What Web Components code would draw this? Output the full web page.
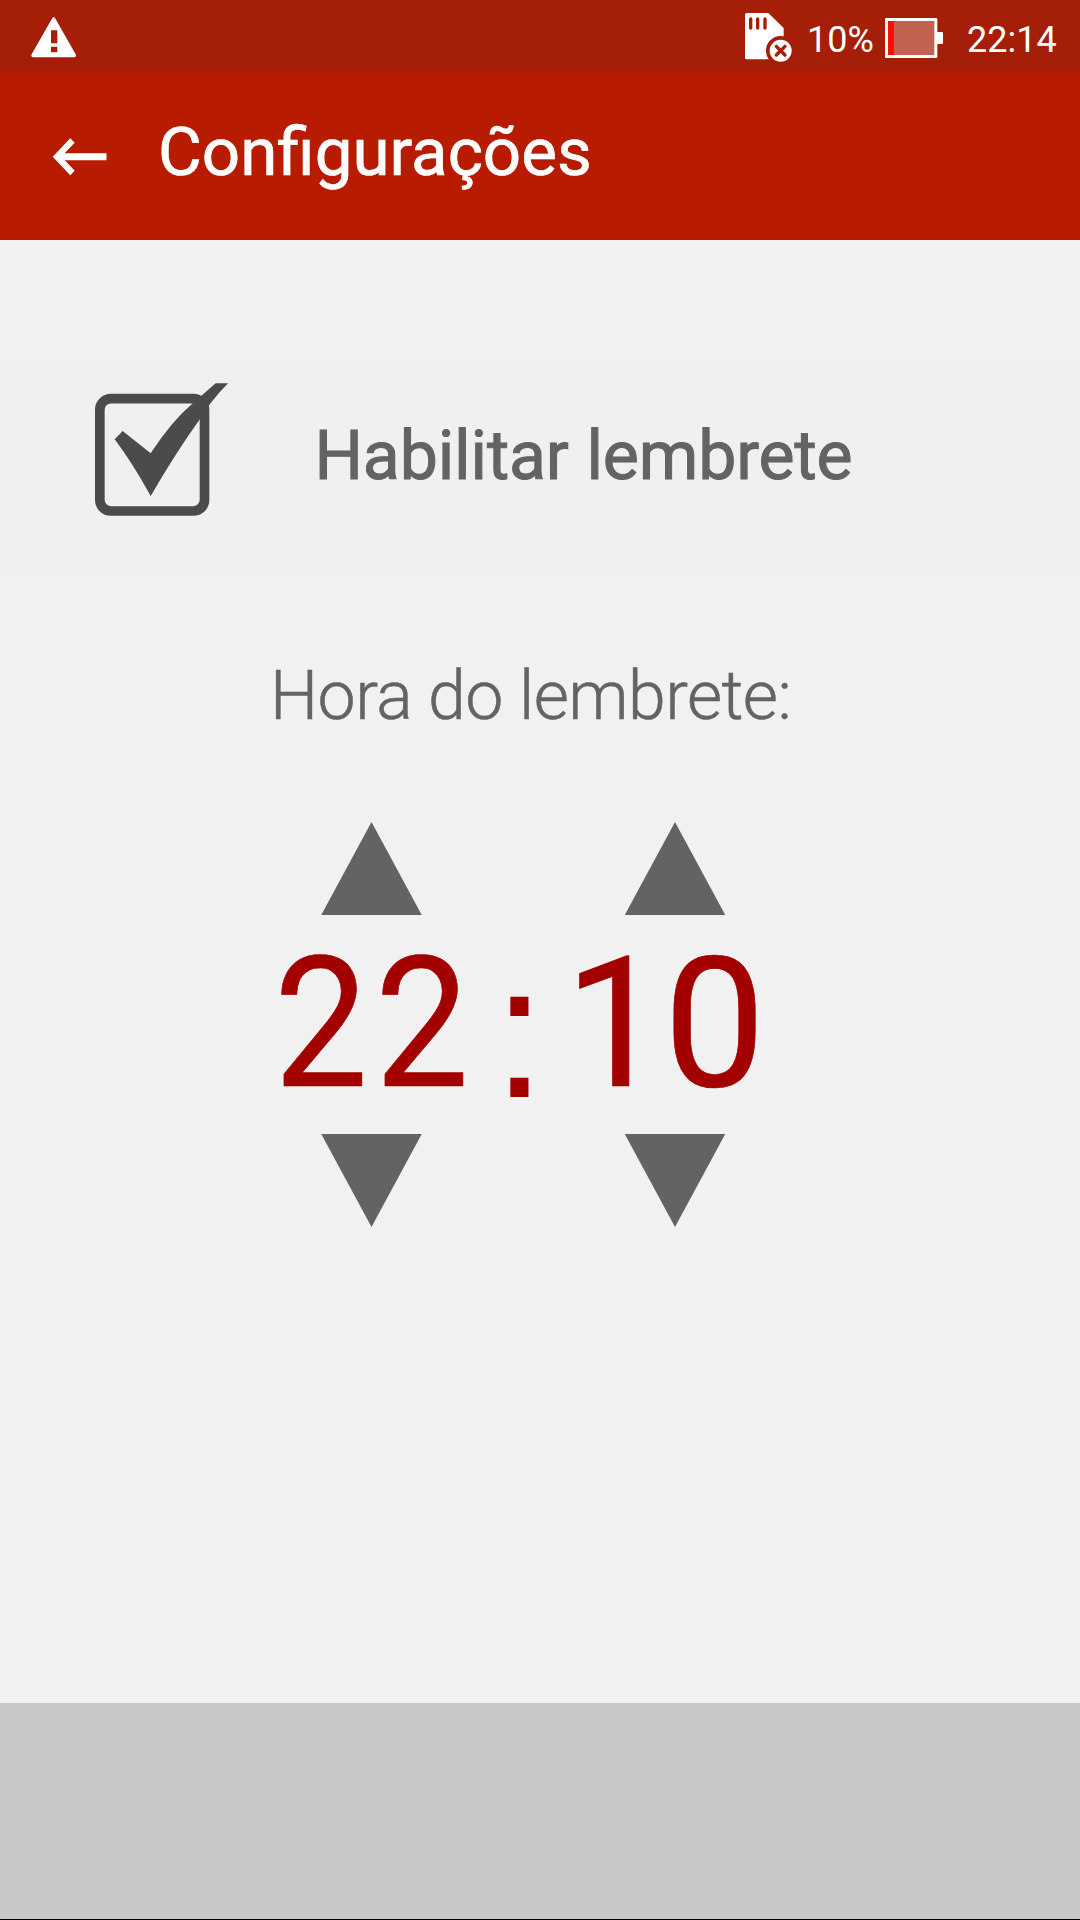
<!DOCTYPE html>
<html lang="pt-BR">
<head>
<meta charset="utf-8">
<title>Configurações</title>
<style>
html,body{margin:0;padding:0;background:#f1f1f1}
body{font-family:Roboto,sans-serif}
</style>
</head>
<body>
<reminder-settings></reminder-settings>
<script>
const define = (name, html) => customElements.define(name, class extends HTMLElement {
  constructor() {
    super();
    const t = document.createElement('template');
    t.innerHTML = html;
    this.attachShadow({ mode: 'open' }).append(t.content.cloneNode(true));
  }
});

define('icon-warning', `<style>:host{display:block}svg{display:block}</style>
<svg width="47" height="42" viewBox="0 0 141 126">
  <path fill="#fff" fill-rule="evenodd" d="M64 3Q68 -3 72 3L134 112Q137 121 130 121H6Q-1 121 2 112ZM60 40V79H79V40ZM60 89V106H79V89Z"/>
</svg>`);

define('icon-sdcard', `<style>:host{display:block}svg{display:block}</style>
<svg width="48" height="50" viewBox="0 0 144 150">
  <path fill="#fff" d="M5 0H70L116 45V139H5Q0 139 0 134V5Q0 0 5 0Z"/>
  <path stroke="#a41e08" stroke-width="10" stroke-linecap="round" d="M17 18V45M38 18V45M60 18V45"/>
  <circle cx="107" cy="113" r="44" fill="#a41e08"/>
  <circle cx="107" cy="113" r="33" fill="#fff"/>
  <path stroke="#a41e08" stroke-width="10" stroke-linecap="round" d="M94 100L120 126M120 100L94 126"/>
</svg>`);

define('icon-battery', `<style>:host{display:block}svg{display:block}</style>
<svg width="58" height="40" viewBox="0 0 174 120">
  <rect width="157" height="120" rx="4" fill="#fff"/>
  <rect x="150" y="42" width="24" height="36" rx="3" fill="#fff"/>
  <rect x="9" y="9" width="139" height="102" fill="#c26250"/>
  <rect x="9" y="9" width="18" height="102" fill="#ff0d00"/>
</svg>`);

define('icon-back', `<style>:host{display:block}svg{display:block}</style>
<svg width="56" height="42" viewBox="0 0 56 42">
  <path fill="none" stroke="#fff" stroke-width="7" d="M5 20.7H54.500"/>
  <path fill="none" stroke="#fff" stroke-width="6.2" d="M20.5 4.5L5 20.7L20.5 37"/>
</svg>`);

define('check-box', `<style>:host{display:block}svg{display:block}</style>
<svg width="134" height="134" viewBox="75 99 402 402">
  <rect x="89.500" y="146" width="314" height="337" rx="33" fill="none" stroke="#4b4b4b" stroke-width="29"/>
  <path fill="#4b4b4b" d="M134 268L158 243L242 310Q305 214 365 163L437 100H474Q418 158 390 207Q318 307 242 438Q188 340 134 268Z"/>
</svg>`);

define('status-bar', `<style>
:host{display:flex;height:72px;box-sizing:border-box;background:#a41e08;color:#fff;padding:0 23px 0 31px;font-size:36px}
.grow{flex:1}
icon-warning{margin-top:17px}
icon-sdcard{margin-top:12.600px}
icon-battery{margin:18px 24px 0 12px}
span{line-height:46px;padding-top:17px;white-space:nowrap}
.pct{width:66px;margin-left:14px}
.time{width:90px}
</style>
<icon-warning></icon-warning><div class="grow"></div>
<icon-sdcard></icon-sdcard><span class="pct">10%</span><icon-battery></icon-battery><span class="time">22:14</span>`);

define('app-bar', `<style>
:host{display:flex;height:168px;box-sizing:border-box;background:#b81c00;color:#fff;padding-left:52px}
icon-back{margin-top:64px}
h1{margin:40px 0 0 50px;font-size:67.300px;font-weight:400;line-height:80px;white-space:nowrap;-webkit-text-stroke:.7px currentColor}
</style>
<icon-back></icon-back><h1><slot></slot></h1>`);

define('option-row', `<style>
:host{display:flex;height:216px;background:#f0f0f0;box-sizing:border-box;padding-left:95px;color:#636363}
check-box{margin-top:23px}
span{margin:56px 0 0 85.500px;font-size:68px;line-height:80px;font-weight:400;letter-spacing:-.15px;word-spacing:1px;white-space:nowrap;-webkit-text-stroke:1px currentColor}
</style>
<check-box></check-box><span><slot></slot></span>`);

define('step-arrow', `<style>
:host{display:block;width:100.500px;height:93px;background:#636363;clip-path:polygon(50% 0,100% 100%,0 100%)}
:host([down]){clip-path:polygon(0 0,100% 0,50% 100%)}
</style>`);

define('time-wheel', `<style>
:host{display:flex;flex-direction:column;align-items:center;width:202px}
.num{align-self:stretch;height:219px;line-height:219px;font-size:181px;white-space:nowrap;display:flex}
slot{display:block;margin-left:var(--shift);letter-spacing:var(--track);transform:scaleX(var(--squeeze));transform-origin:0 50%;-webkit-text-stroke:.7px currentColor}
</style>
<step-arrow></step-arrow><div class="num"><slot></slot></div><step-arrow down></step-arrow>`);

define('time-picker', `<style>
:host{display:flex;color:#a30000;padding-left:270.500px}
.h{--shift:3.500px;--track:7.400px;--squeeze:.925}
.m{--shift:-9.500px;--track:-2.500px;--squeeze:1}
.sep{width:101.500px;box-sizing:border-box;padding:90px 0 0 20.500px;font:190px/238px "Liberation Sans",sans-serif}
</style>
<time-wheel class="h">22</time-wheel><div class="sep">:</div><time-wheel class="m">10</time-wheel>`);

define('reminder-settings', `<style>
:host{display:flex;flex-direction:column;width:1080px;height:1920px;background:#f1f1f1;overflow:hidden}
option-row{margin-top:120px}
h2{margin:80px 0 0 270px;font-size:68px;line-height:80px;font-weight:300;letter-spacing:-.55px;color:#636363;white-space:nowrap;-webkit-text-stroke:.5px currentColor}
time-picker{margin-top:86px}
footer{margin-top:auto;height:217px;box-sizing:border-box;background:#c8c8c8;border-bottom:1px solid #000}
</style>
<status-bar></status-bar>
<app-bar>Configurações</app-bar>
<option-row>Habilitar lembrete</option-row>
<h2>Hora do lembrete:</h2>
<time-picker></time-picker>
<footer></footer>`);
</script>
</body>
</html>
